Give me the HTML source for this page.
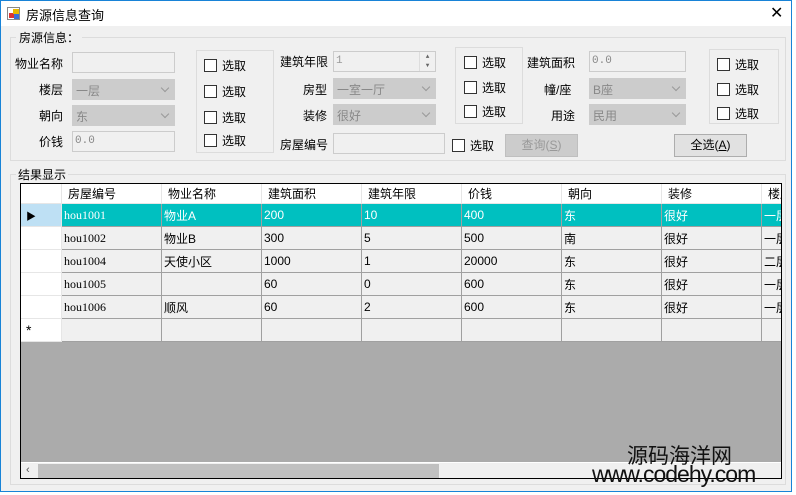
<!DOCTYPE html>
<html><head><meta charset="utf-8"><style>
*{box-sizing:border-box;margin:0;padding:0}
body{width:796px;height:495px;background:#fff;position:relative;overflow:hidden;font-family:"Liberation Sans","Noto Sans CJK SC",sans-serif;font-size:12px;color:#000}
.a{position:absolute}
.win{left:0;top:0;width:792px;height:492px;border:1px solid #1883d7;background:#f0f0f0}
.title{left:1px;top:1px;width:790px;height:25px;background:#fff}
.lbl{position:absolute;font-size:12px;white-space:nowrap}
.tb{position:absolute;height:21px;border:1px solid #ccc;background:#f0f0f0;color:#888;font-size:11px;padding:3px 2px;font-family:"Liberation Mono","Noto Sans CJK SC",monospace}
.cb{position:absolute;height:21px;border:1px solid #ccc;background:#ccc;color:#888;font-size:12px;padding:2px 3px}
.cb:after{content:"";position:absolute;right:6px;top:5px;width:5px;height:5px;border-right:1px solid #999;border-bottom:1px solid #999;transform:rotate(45deg)}
.chk{position:absolute;font-size:12px;white-space:nowrap}
.chk i{display:inline-block;width:13px;height:13px;border:1px solid #333;background:#fff;vertical-align:-2px;margin-right:5px}
.box{position:absolute;border:1px solid #dcdcdc}
.grp{position:absolute;border:1px solid #dcdcdc}
.btn{position:absolute;height:23px;border:1px solid #adadad;background:#e1e1e1;text-align:center;line-height:21px;font-size:12px}
.grid{left:20px;top:183px;width:762px;height:296px;border:1px solid #000;background:#ababab;overflow:hidden}
table{border-collapse:collapse;position:absolute;left:-1px;top:-1px;table-layout:fixed;width:841px}
td{height:23px;border:1px solid #a0a0a0;background:#f0f0f0;padding:0 2px;white-space:nowrap;overflow:hidden;font-size:12px}
td.rh{background:#fff;border-color:#e6e6e6}
tr.h td{background:#fff;height:20px;border-color:#e6e6e6;padding-left:6px}
tr.s td{background:#00c0c0;color:#fff}
tr.s td.rh{background:#bee0f4;color:#000}
.m{font-family:"Liberation Serif","Noto Serif CJK SC",serif}
</style></head><body>
<div class="a win"></div>
<div class="a title"></div>
<div class="a" style="left:7px;top:7px;width:13px;height:13px;border:1px solid #888;background:#fff">
 <div class="a" style="left:1px;top:5px;width:5px;height:5px;background:#d33"></div>
 <div class="a" style="left:5px;top:1px;width:6px;height:5px;background:#e8b800"></div>
 <div class="a" style="left:6px;top:6px;width:5px;height:5px;background:#3a6fd8"></div>
</div>
<div class="lbl" style="left:26px;top:5px;font-size:13px">房源信息查询</div>
<div class="lbl" style="left:770px;top:3px;font-size:16px;font-weight:300">✕</div>

<div class="grp" style="left:10px;top:37px;width:776px;height:124px"></div>
<div class="lbl" style="left:16px;top:29px;background:#f0f0f0;padding:0 3px;font-size:12px">房源信息：</div>

<div class="lbl" style="left:15px;top:55px">物业名称</div>
<div class="tb" style="left:72px;top:52px;width:103px"></div>
<div class="lbl" style="left:39px;top:81px">楼层</div>
<div class="cb" style="left:72px;top:79px;width:103px">一层</div>
<div class="lbl" style="left:39px;top:107px">朝向</div>
<div class="cb" style="left:72px;top:105px;width:103px">东</div>
<div class="lbl" style="left:39px;top:133px">价钱</div>
<div class="tb" style="left:72px;top:131px;width:103px">0.0</div>

<div class="box" style="left:196px;top:50px;width:78px;height:103px"></div>
<div class="chk" style="left:204px;top:57px"><i></i>选取</div>
<div class="chk" style="left:204px;top:83px"><i></i>选取</div>
<div class="chk" style="left:204px;top:109px"><i></i>选取</div>
<div class="chk" style="left:204px;top:132px"><i></i>选取</div>

<div class="lbl" style="left:280px;top:53px">建筑年限</div>
<div class="tb" style="left:333px;top:51px;width:103px;color:#999">1
 <div class="a" style="right:0;top:0;width:16px;height:19px;border-left:1px solid #ddd;font-size:6px;color:#666;text-align:center;line-height:9px">▲<br>▼</div></div>
<div class="lbl" style="left:303px;top:81px">房型</div>
<div class="cb" style="left:333px;top:78px;width:103px">一室一厅</div>
<div class="lbl" style="left:303px;top:107px">装修</div>
<div class="cb" style="left:333px;top:104px;width:103px">很好</div>
<div class="lbl" style="left:280px;top:136px">房屋编号</div>
<div class="tb" style="left:333px;top:133px;width:112px"></div>
<div class="chk" style="left:452px;top:137px"><i></i>选取</div>
<div class="btn" style="left:505px;top:134px;width:73px;color:#999;background:#ccc;border-color:#bfbfbf">查询(<u>S</u>)</div>

<div class="box" style="left:455px;top:47px;width:68px;height:77px"></div>
<div class="chk" style="left:464px;top:54px"><i></i>选取</div>
<div class="chk" style="left:464px;top:79px"><i></i>选取</div>
<div class="chk" style="left:464px;top:103px"><i></i>选取</div>

<div class="lbl" style="left:527px;top:54px">建筑面积</div>
<div class="tb" style="left:589px;top:51px;width:97px">0.0</div>
<div class="lbl" style="left:544px;top:81px">幢/座</div>
<div class="cb" style="left:589px;top:78px;width:97px">B座</div>
<div class="lbl" style="left:551px;top:107px">用途</div>
<div class="cb" style="left:589px;top:104px;width:97px">民用</div>
<div class="btn" style="left:674px;top:134px;width:73px">全选(<u>A</u>)</div>

<div class="box" style="left:709px;top:49px;width:70px;height:75px"></div>
<div class="chk" style="left:717px;top:56px"><i></i>选取</div>
<div class="chk" style="left:717px;top:81px"><i></i>选取</div>
<div class="chk" style="left:717px;top:105px"><i></i>选取</div>

<div class="grp" style="left:10px;top:174px;width:776px;height:311px"></div>
<div class="lbl" style="left:16px;top:166px;background:#f0f0f0;padding:0 2px">结果显示</div>

<div class="a grid">
<table>
<colgroup><col style="width:41px"><col style="width:100px"><col style="width:100px"><col style="width:100px"><col style="width:100px"><col style="width:100px"><col style="width:100px"><col style="width:100px"><col style="width:100px"></colgroup>
<tr class="h"><td class="rh"></td><td>房屋编号</td><td>物业名称</td><td>建筑面积</td><td>建筑年限</td><td>价钱</td><td>朝向</td><td>装修</td><td>楼层</td></tr>
<tr class="s"><td class="rh" style="font-size:10px;padding-left:5px">▶</td><td class="m">hou1001</td><td>物业A</td><td>200</td><td>10</td><td>400</td><td>东</td><td>很好</td><td>一层</td></tr>
<tr><td class="rh"></td><td class="m">hou1002</td><td>物业B</td><td>300</td><td>5</td><td>500</td><td>南</td><td>很好</td><td>一层</td></tr>
<tr><td class="rh"></td><td class="m">hou1004</td><td>天使小区</td><td>1000</td><td>1</td><td>20000</td><td>东</td><td>很好</td><td>二层</td></tr>
<tr><td class="rh"></td><td class="m">hou1005</td><td></td><td>60</td><td>0</td><td>600</td><td>东</td><td>很好</td><td>一层</td></tr>
<tr><td class="rh"></td><td class="m">hou1006</td><td>顺风</td><td>60</td><td>2</td><td>600</td><td>东</td><td>很好</td><td>一层</td></tr>
<tr><td class="rh" style="padding-left:5px;font-size:14px">*</td><td></td><td></td><td></td><td></td><td></td><td></td><td></td><td></td></tr>
</table>
<div class="a" style="left:0;top:278px;width:760px;height:17px;background:#f0f0f0;border-top:1px solid #fff">
 <div class="a" style="left:5px;top:1px;font-size:11px;color:#555">‹</div>
 <div class="a" style="left:17px;top:1px;width:401px;height:14px;background:#c0c0c0"></div>
</div>
</div>
<div class="lbl" style="left:627px;top:440px;font-size:21px;color:#111">源码海洋网</div>
<div class="lbl" style="left:592px;top:461px;font-size:23px;color:#111;letter-spacing:-1px">www.codehy.com</div>
</body></html>
